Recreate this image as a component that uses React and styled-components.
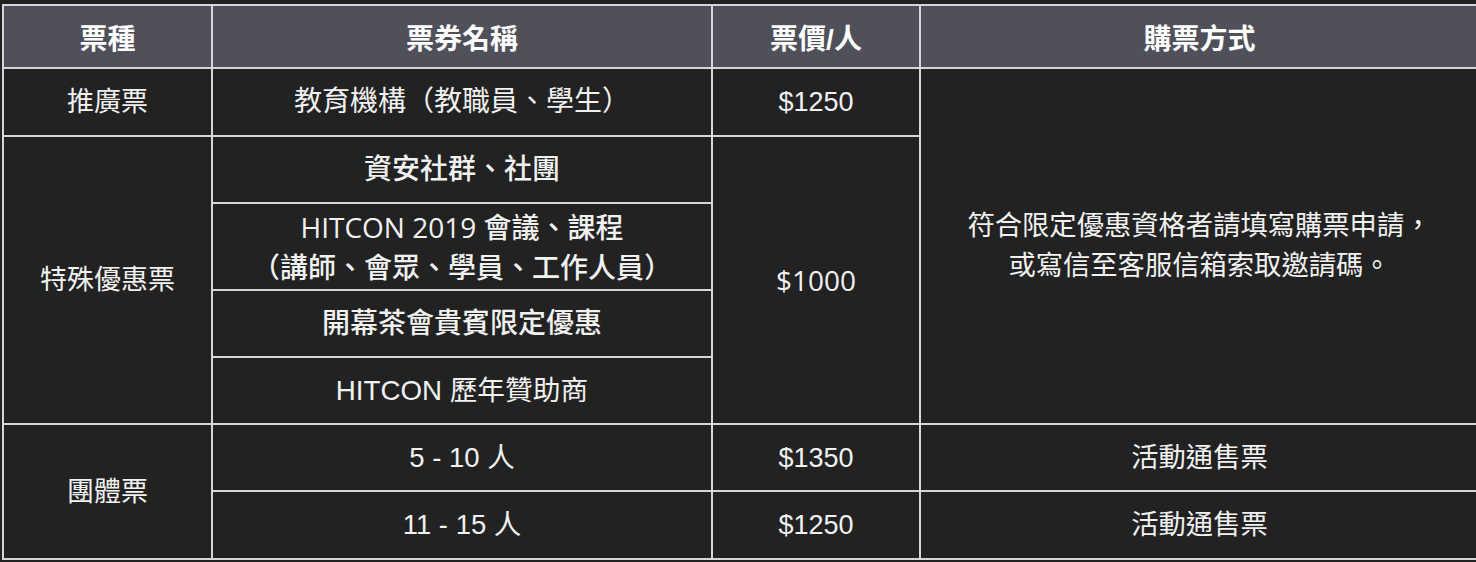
import React from "react";
import styled, { createGlobalStyle } from "styled-components";

const Global = createGlobalStyle`
  html, body {
    margin: 0;
    padding: 0;
    background: #222222;
    overflow: hidden;
  }
  body {
    font-family: "Liberation Sans", "Noto Sans CJK TC", sans-serif;
    color: #f2f2f2;
  }
`;

const Page = styled.div`
  padding: 4px 0 0 2px;
  width: 1480px;
`;

const Table = styled.table`
  border-collapse: collapse;
  table-layout: fixed;
  width: 1476px;
`;

const HeadCell = styled.th`
  background: #50505b;
  border: 2px solid #d6d6da;
  font-size: 28px;
  font-weight: 700;
  text-align: center;
  vertical-align: middle;
  padding: 0;
  color: #ffffff;
`;

const Cell = styled.td`
  border: 2px solid #d6d6da;
  text-align: center;
  vertical-align: middle;
  padding: 0 10px;
  line-height: 40px;
  font-weight: ${(p) => (p.$bold ? 500 : 400)};
  font-family: ${(p) =>
    p.$alt
      ? `"Open Sans", "Noto Sans CJK TC", sans-serif`
      : `"Liberation Sans", "Noto Sans CJK TC", sans-serif`};
  font-size: ${(p) => p.$size || 27.5}px;
`;

const Row = styled.tr`
  height: ${(p) => p.$h}px;
`;

export default function App() {
  return (
    <>
      <Global />
      <Page>
        <Table>
          <colgroup>
            <col style={{ width: 209 }} />
            <col style={{ width: 500 }} />
            <col style={{ width: 208 }} />
            <col style={{ width: 559 }} />
          </colgroup>
          <thead>
            <Row $h={63}>
              <HeadCell>票種</HeadCell>
              <HeadCell>票券名稱</HeadCell>
              <HeadCell>票價/人</HeadCell>
              <HeadCell>購票方式</HeadCell>
            </Row>
          </thead>
          <tbody>
            <Row $h={68}>
              <Cell $size={27}>推廣票</Cell>
              <Cell $size={28}>教育機構（教職員、學生）</Cell>
              <Cell $size={27}>$1250</Cell>
              <Cell rowSpan={5} $size={27.3}>
                符合限定優惠資格者請填寫購票申請，
                <br />
                或寫信至客服信箱索取邀請碼。
              </Cell>
            </Row>
            <Row $h={67}>
              <Cell rowSpan={4} $size={27}>特殊優惠票</Cell>
              <Cell $bold $size={28}>資安社群、社團</Cell>
              <Cell rowSpan={4} $alt $size={28}>$1000</Cell>
            </Row>
            <Row $h={87}>
              <Cell $bold $alt $size={28}>
                HITCON 2019 會議、課程
                <br />
                （講師、會眾、學員、工作人員）
              </Cell>
            </Row>
            <Row $h={67}>
              <Cell $bold $size={28}>開幕茶會貴賓限定優惠</Cell>
            </Row>
            <Row $h={67}>
              <Cell $size={27.7}>HITCON 歷年贊助商</Cell>
            </Row>
            <Row $h={67}>
              <Cell rowSpan={2} $size={27}>團體票</Cell>
              <Cell>5 - 10 人</Cell>
              <Cell $size={27}>$1350</Cell>
              <Cell $size={27.3}>活動通售票</Cell>
            </Row>
            <Row $h={68}>
              <Cell>11 - 15 人</Cell>
              <Cell $size={27}>$1250</Cell>
              <Cell $size={27.3}>活動通售票</Cell>
            </Row>
          </tbody>
        </Table>
      </Page>
    </>
  );
}
